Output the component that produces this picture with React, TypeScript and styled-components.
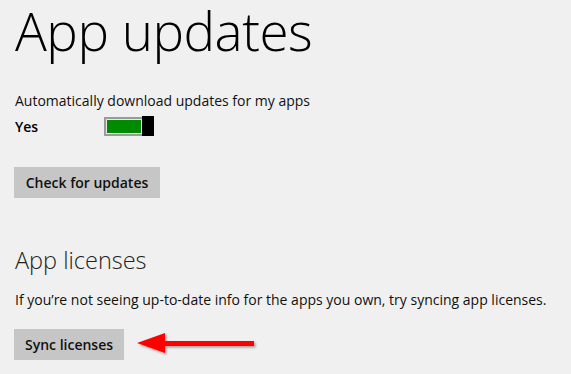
import * as React from 'react';
import styled, { createGlobalStyle } from 'styled-components';

const GlobalStyle = createGlobalStyle`
    html, body {
        margin: 0;
        padding: 0;
        background: #f0f0f0;
    }
    body {
        font-family: "Open Sans", "Noto Sans", sans-serif;
        color: #000;
    }
`

const Page = styled.main`
    width: 571px;
    height: 374px;
    padding: 0 0 0 15px;
    box-sizing: border-box;
    overflow: hidden;
    display: flex;
    flex-direction: column;
`

const Title = styled.h1`
    margin: 0;
    font-size: 53px;
    font-weight: 300;
    line-height: 62px;
    letter-spacing: -0.5px;
`

const Subtitle = styled.h2<{$top: number}>`
    margin: ${({$top}) => $top}px 0 0 0;
    font-size: 23.5px;
    font-weight: 300;
    line-height: 30px;
    color: #222;
`

const Label = styled.p<{$top: number}>`
    margin: ${({$top}) => $top}px 0 0 0;
    font-size: 14px;
    line-height: 20px;
    color: #111;
`

const SettingRow = styled.div`
    display: flex;
    align-items: center;
    height: 22px;
    margin-top: 4px;
`

const Value = styled.span`
    width: 89px;
    font-size: 14px;
    font-weight: 600;
`

const Toggle = styled.div`
    display: flex;
    width: 50px;
    height: 19px;
`

const Track = styled.div<{$on?: boolean}>`
    flex: 1;
    border: 2px solid #9a9a9a;
    border-right: none;
    box-shadow: inset 0 0 0 1px #e8e8e8;
    background: ${({$on}) => $on ? "#008a00" : "#f0f0f0"};
`

const Thumb = styled.div`
    width: 12px;
    margin-top: -1px;
    background: #000;
`

const ButtonRow = styled.div<{$top: number}>`
    display: flex;
    align-items: center;
    gap: 11px;
    margin: ${({$top}) => $top}px 0 0 -1px;
`

const Button = styled.button<{$width: number}>`
    width: ${({$width}) => $width}px;
    height: 31px;
    padding: 0;
    border: none;
    background: #c6c6c6;
    font-family: "Open Sans", "Noto Sans", sans-serif;
    font-size: 14px;
    font-weight: 600;
    color: #111;
    cursor: pointer;
`

const Arrow = () => (
    <svg width="124" height="26" viewBox="0 0 124 26">
        <defs>
            <filter id="shadow" x="-10%" y="-40%" width="120%" height="180%">
                <feDropShadow dx="1.5" dy="1.5" stdDeviation="1.2" floodColor="#000" floodOpacity="0.35" />
            </filter>
        </defs>
        <g filter="url(#shadow)">
            <polygon points="2,11 30,1 30,9 119,9 119,14 30,14 30,21" fill="#ff0000" />
        </g>
    </svg>
)

export default function App() {
    return (
        <>
            <GlobalStyle />
            <Page>
                <Title>App updates</Title>
                <Label $top={29}>Automatically download updates for my apps</Label>
                <SettingRow>
                    <Value>Yes</Value>
                    <Toggle>
                        <Track $on />
                        <Thumb />
                    </Toggle>
                </SettingRow>
                <ButtonRow $top={30}>
                    <Button $width={146}>Check for updates</Button>
                </ButtonRow>
                <Subtitle $top={47}>App licenses</Subtitle>
                <Label $top={15}>If you’re not seeing up-to-date info for the apps you own, try syncing app licenses.</Label>
                <ButtonRow $top={19}>
                    <Button $width={110}>Sync licenses</Button>
                    <Arrow />
                </ButtonRow>
            </Page>
        </>
    )
}
